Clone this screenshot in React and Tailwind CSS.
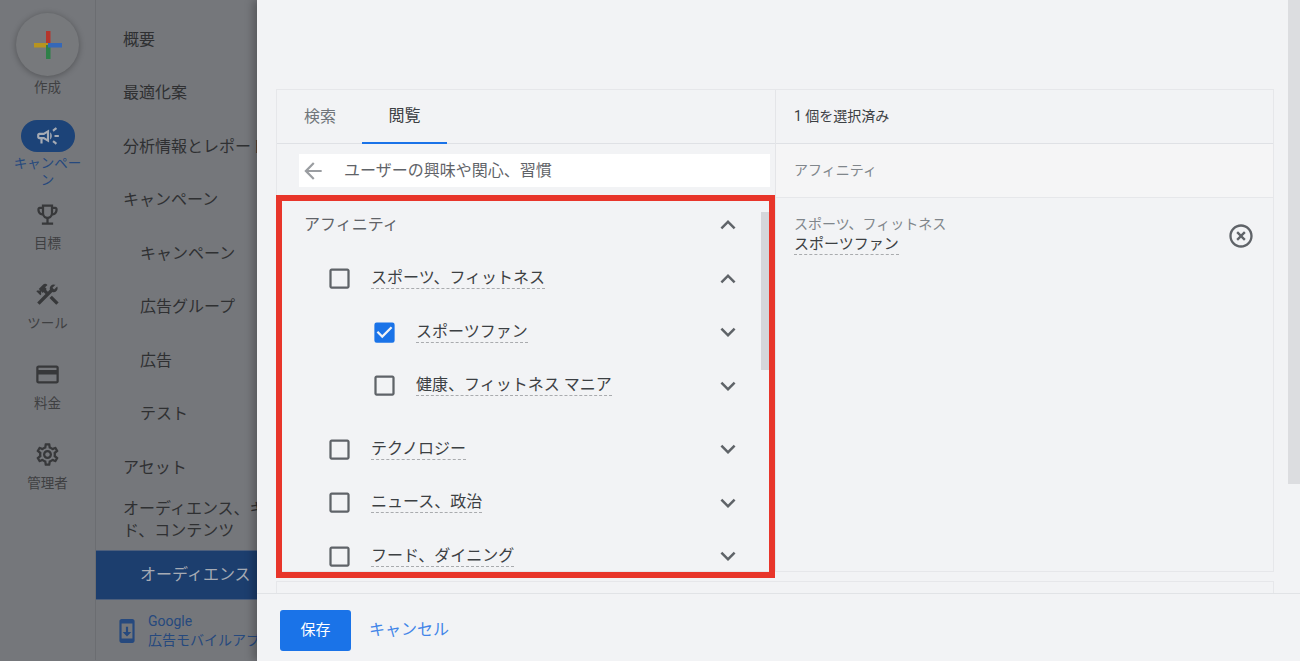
import React from 'react';
import {
  MdAdd, MdArrowBack, MdCheckBox, MdCheckBoxOutlineBlank, MdExpandLess, MdExpandMore,
  MdHighlightOff, MdOutlineCampaign, MdOutlineCreditCard, MdOutlineEmojiEvents,
  MdOutlineSettings, MdConstruction, MdSystemUpdate,
} from 'react-icons/md';

const FONT = "font-['Roboto','Noto_Sans_CJK_JP',sans-serif]";

const NAV = [
  { label: '概要' },
  { label: '最適化案' },
  { label: '分析情報とレポート' },
  { label: 'キャンペーン' },
  { label: 'キャンペーン', sub: true },
  { label: '広告グループ', sub: true },
  { label: '広告', sub: true },
  { label: 'テスト', sub: true },
  { label: 'アセット' },
];

const RAIL = [
  { icon: MdOutlineEmojiEvents, label: '目標', h: 'h-[80px]' },
  { icon: MdConstruction, label: 'ツール', h: 'h-[80px]' },
  { icon: MdOutlineCreditCard, label: '料金', h: 'h-[80px]' },
  { icon: MdOutlineSettings, label: '管理者', h: 'h-[80px]' },
];

const CreateIcon = () => (
  <svg width="30" height="30" viewBox="0 0 30 30">
    <rect x="13" y="1" width="4.5" height="14" fill="#b5362c" />
    <rect x="1" y="13" width="14" height="4.5" fill="#b8941f" />
    <rect x="13" y="15" width="4.5" height="14" fill="#2f8048" />
    <rect x="15" y="13" width="14" height="4.5" fill="#3568b8" />
  </svg>
);

const Rail = () => (
  <div className="w-[96px] shrink-0 h-[660px] flex flex-col items-center border-r border-[#6b6d71] pt-[13px]">
    <div className="w-[63px] h-[63px] rounded-full bg-[#77797c] shadow-[0_1px_6px_rgba(0,0,0,0.3)] flex items-center justify-center">
      <CreateIcon />
    </div>
    <span className="text-[13.5px] leading-[20px] text-[#3f4042] mt-[1px]">作成</span>
    <div className="mt-[23px] w-[54px] h-[32px] rounded-full bg-[#1c4378] flex items-center justify-center text-[#a6abb4]">
      <MdOutlineCampaign size={26} />
    </div>
    <span className="w-[72px] text-center text-[13.5px] leading-[17px] text-[#26497e] mt-[3px] mb-[12px]">キャンペーン</span>
    {RAIL.map((r) => (
      <div key={r.label} className={`${r.h} w-full flex flex-col items-center shrink-0`}>
        <r.icon size={27} className="text-[#37383a]" />
        <span className="text-[13.5px] leading-[20px] text-[#3f4042] mt-[5px]">{r.label}</span>
      </div>
    ))}
  </div>
);

const Nav = () => (
  <div className="w-[161px] shrink-0 h-[660px] overflow-hidden flex flex-col pt-[13px] whitespace-nowrap text-[16px] text-[#2f3032]">
    {NAV.map((n, i) => (
      <div key={i} className={`h-[53.5px] shrink-0 flex items-center ${n.sub ? 'pl-[44px]' : 'pl-[27px]'}`}>{n.label}</div>
    ))}
    <div className="pl-[27px] leading-[22px] pt-[3px] h-[55px] shrink-0">
      オーディエンス、キーワー<br />ド、コンテンツ
    </div>
    <div className="h-[50px] shrink-0 bg-[#1c3e6e] border-y border-[#4d5f7c] flex items-center pl-[44px] text-[#a6abb4]">オーディエンス</div>
    <div className="flex items-center pl-[22px] gap-[8px] pt-[12px] text-[#26497e] text-[14px] leading-[19px]">
      <MdSystemUpdate size={26} className="-ml-[4px] shrink-0" />
      <div>Google<br />広告モバイルアプリ</div>
    </div>
  </div>
);

const Dotted = ({ children, className = '' }) => (
  <span className={`border-b border-dashed border-[#a9abae] leading-[20px] ${className}`}>{children}</span>
);

const Row = ({ label, indent, checked, open, className = '' }) => {
  const Box = checked ? MdCheckBox : MdCheckBoxOutlineBlank;
  const Chevron = open ? MdExpandLess : MdExpandMore;
  return (
    <div className={`h-[53.5px] flex items-center shrink-0 ${indent ? 'pl-[94px]' : 'pl-[49px]'} ${className}`}>
      <Box size={27} className={`shrink-0 ${checked ? 'text-[#1a73e8]' : 'text-[#5f6368]'}`} />
      <Dotted className="ml-[18px] text-[16px] text-[#3c4043]">{label}</Dotted>
      <Chevron size={30} className="ml-auto mr-[32px] text-[#5f6368] shrink-0" />
    </div>
  );
};

const Picker = () => (
  <div className="w-[499px] shrink-0 border-r border-[#e4e5e8] flex flex-col">
    <div className="h-[54px] shrink-0 flex border-b border-[#dfe1e5] text-[16px]">
      <div className="w-[85px] flex items-center pl-[27px] text-[#70757a]">検索</div>
      <div className="w-[85px] flex items-center justify-center text-[#3c4043] border-b-2 border-[#1a73e8] h-[54px]">閲覧</div>
    </div>
    <div className="h-[54px] shrink-0 pl-[22px] pr-[5px] pt-[10px]">
      <div className="h-[33px] bg-white flex items-center text-[16px] text-[#5f6368]">
        <MdArrowBack size={26} className="text-[#9a9da1] ml-[1px]" />
        <span className="ml-[18px]">ユーザーの興味や関心、習慣</span>
      </div>
    </div>
    <div className="relative flex-1 overflow-hidden flex flex-col">
      <div className="h-[54px] shrink-0 flex items-center pl-[27px] text-[16px] text-[#5f6368]">
        アフィニティ
        <MdExpandLess size={30} className="ml-auto mr-[32px] text-[#5f6368]" />
      </div>
      <Row label="スポーツ、フィットネス" open />
      <Row label="スポーツファン" indent checked />
      <Row label="健康、フィットネス マニア" indent />
      <Row label="テクノロジー" className="mt-[10px]" />
      <Row label="ニュース、政治" />
      <Row label="フード、ダイニング" />
      <div className="absolute right-[6px] top-[14px] w-[8px] h-[158px] bg-[#d5d6da]" />
    </div>
  </div>
);

const Selected = () => (
  <div className="flex-1 flex flex-col">
    <div className="h-[54px] shrink-0 flex items-center pl-[18px] border-b border-[#dfe1e5] text-[14px] text-[#3c4043]">1 個を選択済み</div>
    <div className="h-[54px] shrink-0 flex items-center pl-[18px] bg-[#f5f5f6] border-b border-[#e6e7ea] text-[14px] text-[#80868b]">アフィニティ</div>
    <div className="flex pl-[18px] pt-[16px] pr-[18px]">
      <div className="flex flex-col items-start">
        <span className="text-[14px] leading-[20px] text-[#80868b]">スポーツ、フィットネス</span>
        <Dotted className="text-[15px] text-[#3c4043]">スポーツファン</Dotted>
      </div>
      <MdHighlightOff size={28} className="ml-auto mt-[8px] text-[#5f6368]" />
    </div>
  </div>
);

const Dialog = () => (
  <div className="flex-1 h-[661px] bg-[#f2f3f5] shadow-[-4px_0_8px_rgba(0,0,0,0.25)] flex flex-col relative">
    <div className="flex-1 overflow-hidden flex relative">
      <div className="flex-1 min-w-0 pl-[19px] pr-[14px] pt-[89px]">
        <div className="h-[483px] border border-[#e6e7ea] flex">
          <Picker />
          <Selected />
        </div>
        <div className="h-[20px] mt-[9px] border border-[#e6e7ea]" />
      </div>
      <div className="w-[12px] shrink-0 flex flex-col">
        <div className="h-[484px] bg-[#dcdde0]" />
      </div>
    </div>
    <div className="h-[68px] shrink-0 border-t border-[#e1e3e6] flex items-center pl-[23px] pt-[5px]">
      <button className="w-[71px] h-[41px] rounded-[3px] bg-[#1a73e8] text-white text-[15px]">保存</button>
      <span className="ml-[18px] text-[16px] text-[#4285e8]">キャンセル</span>
    </div>
    <div className="absolute left-[19px] top-[195px] w-[499px] h-[383px] border-[6px] border-[#e8352a] pointer-events-none" />
  </div>
);

export default function App() {
  return (
    <div className={`w-[1300px] h-[661px] overflow-hidden flex bg-[#75777b] ${FONT}`}>
      <Rail />
      <Nav />
      <Dialog />
    </div>
  );
}
